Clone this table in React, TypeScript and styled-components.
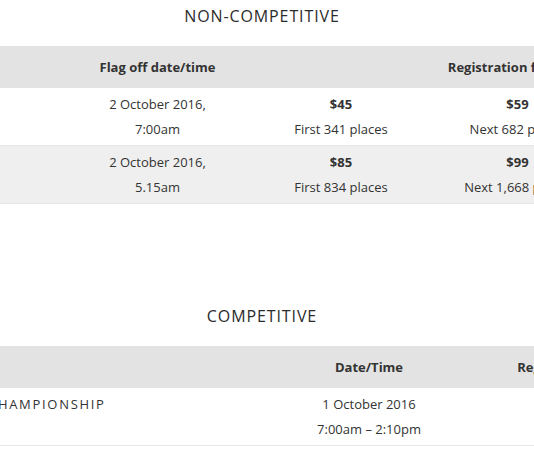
import React from "react";
import styled, { createGlobalStyle } from "styled-components";

const Global = createGlobalStyle`
  html, body { margin: 0; padding: 0; background: #ffffff; overflow: hidden; }
  body { font-family: "Open Sans", "Liberation Sans", sans-serif; color: #333333; }
`;

const Page = styled.div`
  width: 1000px;
  margin-left: -238px;
  display: flex;
  flex-direction: column;
`;

const Section = styled.section<{ $gap: number }>`
  display: flex;
  flex-direction: column;
  margin-top: ${(p) => p.$gap}px;
`;

const Title = styled.h2`
  margin: 0 0 18px;
  text-align: center;
  font-size: 16px;
  line-height: 24px;
  font-weight: 400;
  letter-spacing: 0.9px;
  color: #2b2b2b;
`;

const Table = styled.table`
  width: 1000px;
  table-layout: fixed;
  border-collapse: collapse;
  font-size: 13px;
`;

const HeadRow = styled.tr`
  background: #e3e3e3;
`;

const Th = styled.th<{ $align?: string }>`
  height: 42px;
  padding: 0 8px;
  text-align: ${(p) => p.$align || "center"};
  font-weight: 700;
  font-size: 13px;
  line-height: 25px;
  color: #333333;
  white-space: nowrap;
`;

const Row = styled.tr<{ $alt?: boolean }>`
  background: ${(p) => (p.$alt ? "#efefef" : "#ffffff")};
  border-bottom: 1px solid #e6e6e6;
`;

const Td = styled.td<{ $align?: string }>`
  padding: 4px 8px 3px;
  text-align: ${(p) => p.$align || "center"};
  vertical-align: top;
  line-height: 25px;
  color: #333333;
  white-space: nowrap;
`;

const Price = styled.div`
  font-weight: 700;
`;

const Category = styled.div`
  text-transform: uppercase;
  letter-spacing: 1.7px;
  font-size: 13px;
`;

const nonComp = [
  { date: "2 October 2016,", time: "7:00am", p1: "$45", n1: "First 341 places", p2: "$59", n2: "Next 682 places" },
  { date: "2 October 2016,", time: "5.15am", p1: "$85", n1: "First 834 places", p2: "$99", n2: "Next 1,668 places" },
];

export default function App() {
  return (
    <>
      <Global />
      <Page>
        <Section $gap={4}>
          <Title>NON-COMPETITIVE</Title>
          <Table>
            <colgroup>
              <col style={{ width: 300 }} />
              <col style={{ width: 191 }} />
              <col style={{ width: 176 }} />
              <col style={{ width: 177 }} />
              <col style={{ width: 140 }} />
              <col style={{ width: 16 }} />
            </colgroup>
            <thead>
              <HeadRow>
                <Th />
                <Th>Flag off date/time</Th>
                <Th colSpan={3}>Registration fee</Th>
                <Th />
              </HeadRow>
            </thead>
            <tbody>
              {nonComp.map((r, i) => (
                <Row key={i} $alt={i % 2 === 1}>
                  <Td />
                  <Td>
                    {r.date}
                    <br />
                    {r.time}
                  </Td>
                  <Td>
                    <Price>{r.p1}</Price>
                    {r.n1}
                  </Td>
                  <Td>
                    <Price>{r.p2}</Price>
                    {r.n2}
                  </Td>
                  <Td />
                  <Td />
                </Row>
              ))}
            </tbody>
          </Table>
        </Section>
        <Section $gap={100}>
          <Title>COMPETITIVE</Title>
          <Table>
            <colgroup>
              <col style={{ width: 218 }} />
              <col style={{ width: 289 }} />
              <col style={{ width: 200 }} />
              <col style={{ width: 200 }} />
              <col style={{ width: 93 }} />
            </colgroup>
            <thead>
              <HeadRow>
                <Th />
                <Th />
                <Th>Date/Time</Th>
                <Th>Registration fee</Th>
                <Th />
              </HeadRow>
            </thead>
            <tbody>
              <Row>
                <Td />
                <Td $align="left">
                  <Category>Championship</Category>
                </Td>
                <Td>
                  1 October 2016
                  <br />
                  7:00am – 2:10pm
                </Td>
                <Td />
                <Td />
              </Row>
            </tbody>
          </Table>
        </Section>
      </Page>
    </>
  );
}
